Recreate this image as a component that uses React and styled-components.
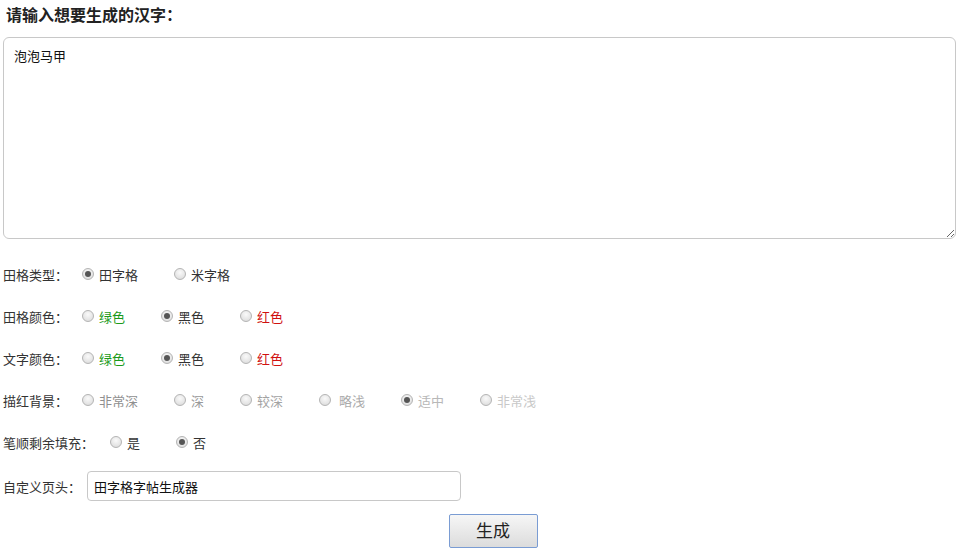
import React from "react"
import styled, { createGlobalStyle } from "styled-components"

const GlobalStyle = createGlobalStyle`
  body {
    margin: 0;
    background: #fff;
    font-family: "Noto Sans CJK SC", "Liberation Sans", sans-serif;
    font-size: 13px;
    color: #333;
  }
`

const Page = styled.div`
  width: 960px;
  padding: 0 3px;
  box-sizing: border-box;
`

const Heading = styled.h3`
  margin: 0;
  padding: 3px 0 0 3px;
  height: 34px;
  font-size: 16px;
  font-weight: bold;
  color: #222;
  line-height: 22px;
`

const TextBox = styled.textarea`
  display: block;
  width: 953px;
  height: 202px;
  box-sizing: border-box;
  border: 1px solid #c8c8c8;
  border-radius: 6px;
  padding: 8px 10px;
  font-family: "Noto Sans CJK SC", sans-serif;
  font-size: 13px;
  line-height: 20px;
  color: #111;
  resize: both;
  outline: none;
`

const Form = styled.div`
  display: flex;
  flex-direction: column;
  gap: 22px;
  margin-top: 25px;
`

const Row = styled.div`
  display: flex;
  align-items: center;
  height: 20px;
  margin-top: ${p => p.$shift || 0}px;
`

const Label = styled.span`
  width: ${p => p.$w || 79}px;
  flex-shrink: 0;
  color: #333;
`

const Options = styled.div`
  display: flex;
  align-items: center;
  gap: 36px;
`

const Option = styled.label`
  display: flex;
  align-items: center;
  gap: 5px;
  color: ${p => p.$color || "#333"};
  white-space: pre;
`

const Radio = styled.input.attrs({ type: "radio" })`
  appearance: none;
  margin: 0;
  width: 12px;
  height: 12px;
  border-radius: 50%;
  border: 1px solid #b4b4b4;
  background: radial-gradient(circle at 50% 35%, #fafafa 0%, #e2e2e2 70%, #d4d4d4 100%);
  box-sizing: border-box;
  position: relative;
  &:checked::after {
    content: "";
    position: absolute;
    left: 2px;
    top: 2px;
    width: 6px;
    height: 6px;
    border-radius: 50%;
    background: #555;
  }
`

const TextInput = styled.input`
  width: 374px;
  height: 30px;
  box-sizing: border-box;
  border: 1px solid #c8c8c8;
  border-radius: 4px;
  padding: 0 6px;
  font-family: "Noto Sans CJK SC", sans-serif;
  font-size: 13px;
  color: #111;
  outline: none;
`

const ButtonRow = styled.div`
  display: flex;
  justify-content: center;
  padding-left: 26px;
  margin-top: 18px;
`

const Button = styled.button`
  width: 89px;
  height: 34px;
  border: 1px solid #7a9cd3;
  border-radius: 2px;
  background: linear-gradient(#f6f6f6, #dcdcdc);
  font-family: "Noto Sans CJK SC", sans-serif;
  font-size: 17px;
  line-height: 30px;
  padding: 0 0 2px;
  color: #222;
`

const RadioGroup = ({ name, options, checked }) => (
  <Options>
    {options.map((o, i) => (
      <Option key={i} $color={o.color}>
        <Radio name={name} defaultChecked={i === checked} />
        {o.text}
      </Option>
    ))}
  </Options>
)

const App = () => (
  <Page>
    <GlobalStyle />
    <Heading>请输入想要生成的汉字：</Heading>
    <TextBox defaultValue="泡泡马甲" />
    <Form>
      <Row>
        <Label>田格类型：</Label>
        <RadioGroup name="type" checked={0} options={[{ text: "田字格" }, { text: "米字格" }]} />
      </Row>
      <Row>
        <Label>田格颜色：</Label>
        <RadioGroup
          name="grid"
          checked={1}
          options={[
            { text: "绿色", color: "#1a9a1a" },
            { text: "黑色" },
            { text: "红色", color: "#d01010" },
          ]}
        />
      </Row>
      <Row>
        <Label>文字颜色：</Label>
        <RadioGroup
          name="font"
          checked={1}
          options={[
            { text: "绿色", color: "#1a9a1a" },
            { text: "黑色" },
            { text: "红色", color: "#d01010" },
          ]}
        />
      </Row>
      <Row>
        <Label>描红背景：</Label>
        <RadioGroup
          name="bg"
          checked={4}
          options={[
            { text: "非常深", color: "#8f8f8f" },
            { text: "深", color: "#999" },
            { text: "较深", color: "#a3a3a3" },
            { text: " 略浅", color: "#ababab" },
            { text: "适中", color: "#b8b8b8" },
            { text: "非常浅", color: "#c8c8c8" },
          ]}
        />
      </Row>
      <Row>
        <Label $w={107}>笔顺剩余填充：</Label>
        <RadioGroup name="fill" checked={1} options={[{ text: "是" }, { text: "否" }]} />
      </Row>
      <Row $shift={2}>
        <Label $w={84}>自定义页头：</Label>
        <TextInput defaultValue="田字格字帖生成器" />
      </Row>
    </Form>
    <ButtonRow>
      <Button>生成</Button>
    </ButtonRow>
  </Page>
)

export default App
